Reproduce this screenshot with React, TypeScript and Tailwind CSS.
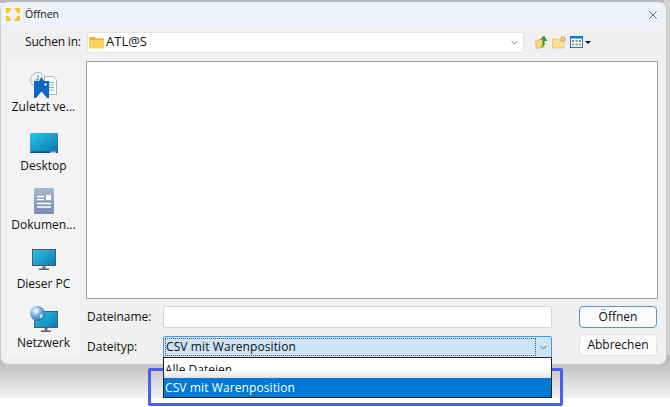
import React from "react";
import { ChevronDown, X } from "lucide-react";

const font = { fontFamily: '"Segoe UI", "Open Sans", "Noto Sans", sans-serif' };

function Folder({ className = "" }: { className?: string }) {
  return (
    <svg viewBox="0 0 16 14" className={className}>
      <path d="M0 2 Q0 1 1 1 H6 L7.5 2.5 H15 Q16 2.5 16 3.5 V5 H0 Z" fill="#e8b33a" />
      <path d="M0 4.5 H16 V12.5 Q16 13.5 15 13.5 H1 Q0 13.5 0 12.5 Z" fill="#fbd35c" />
    </svg>
  );
}

function Logo() {
  return (
    <svg viewBox="0 0 14 13" className="w-[14px] h-[13px]">
      <path d="M0 0 H5 V2 L3 4 V5 H0 Z M9 0 H14 V5 H11 V4 L9 2 Z M0 8 H3 V9 L5 11 V13 H0 Z M11 8 H14 V13 H9 V11 L11 9 Z" fill="#fcc22b" />
    </svg>
  );
}

function RecentIcon() {
  return (
    <svg viewBox="0 0 27 26" className="w-[27px] h-[26px]">
      <circle cx="8" cy="8" r="7.5" fill="#f2f2f2" stroke="#b5b8bb" />
      <path d="M8 3 V8 H5" stroke="#777c82" strokeWidth="1" fill="none" />
      <path d="M14.5 4.5 H23 L26.5 8 V22.5 H14.5 Z" fill="#fff" stroke="#a9afb5" />
      <path d="M19 10.5 H24 M19 13 H24 M19 15.5 H24 M19 18 H24" stroke="#72b4e8" />
      <path d="M4 9 H9 L11.5 5 L14 9 H19 V26 H4 Z" fill="#0a67c4" />
      <path d="M6 26 L11.5 19.5 L17 26 Z" fill="#f3f3f3" />
      <circle cx="15.5" cy="12.5" r="1.2" fill="#e6f2fb" />
    </svg>
  );
}

function DesktopIcon() {
  return (
    <svg viewBox="0 0 28 20" className="w-[28px] h-[20px]">
      <defs>
        <linearGradient id="dk" x1="0" y1="0" x2="1" y2="1">
          <stop offset="0" stopColor="#27c8e6" />
          <stop offset="1" stopColor="#0b72ae" />
        </linearGradient>
      </defs>
      <rect x="0" y="0" width="28" height="19" rx="1" fill="url(#dk)" />
      <rect x="0" y="18.5" width="28" height="1.5" fill="#0c4f7a" />
      <rect x="20" y="18.5" width="6" height="1.5" fill="#9fc5dc" />
    </svg>
  );
}

function DocIcon() {
  return (
    <svg viewBox="0 0 20 26" className="w-[20px] h-[26px]">
      <defs>
        <linearGradient id="dc" x1="0" y1="0" x2="0" y2="1">
          <stop offset="0" stopColor="#a3b7cf" />
          <stop offset="1" stopColor="#7890ae" />
        </linearGradient>
      </defs>
      <rect x="0" y="0" width="20" height="26" rx="1.5" fill="url(#dc)" />
      <path d="M3 8.5 H10 M3 11.5 H10 M3 15.5 H17 M3 19 H17" stroke="#fff" strokeWidth="1.3" />
      <rect x="12" y="7" width="5" height="5" fill="#fff" />
    </svg>
  );
}

function Monitor({ id, className }: { id: string; className: string }) {
  return (
    <svg viewBox="0 0 24 22" className={className}>
      <defs>
        <linearGradient id={id} x1="0" y1="0" x2="1" y2="1">
          <stop offset="0" stopColor="#2bc6e4" />
          <stop offset="1" stopColor="#0d78b8" />
        </linearGradient>
      </defs>
      <rect x="0.5" y="0.5" width="23" height="16" fill={`url(#${id})`} stroke="#4d5a64" />
      <rect x="10.5" y="17" width="3" height="3" fill="#6c7780" />
      <rect x="7" y="19.5" width="10" height="1.5" fill="#59636b" />
    </svg>
  );
}

function NetworkIcon() {
  return (
    <div className="relative w-[28px] h-[27px]">
      <div className="absolute right-0 bottom-0">
        <Monitor id="net" className="w-[24px] h-[22px]" />
      </div>
      <svg viewBox="0 0 15 15" className="absolute left-0 top-0 w-[15px] h-[15px]">
        <defs>
          <radialGradient id="gl" cx="0.35" cy="0.3" r="0.8">
            <stop offset="0" stopColor="#d8eefc" />
            <stop offset="0.6" stopColor="#5a9fd8" />
            <stop offset="1" stopColor="#1c5fa6" />
          </radialGradient>
        </defs>
        <circle cx="7.5" cy="7.5" r="7.5" fill="url(#gl)" />
        <path d="M4 3 L8 2 L9 6 L5 8 Z M10 9 L13 8 L12 12 L10 12 Z" fill="#e6f2fb" opacity="0.85" />
      </svg>
    </div>
  );
}

function UpIcon() {
  return (
    <svg viewBox="0 0 13 14" className="w-[13px] h-[14px]">
      <path d="M0.5 6 L5 4.5 L9 6 V12 L1.5 13.5 Z" fill="#f7d777" stroke="#d8a93a" strokeWidth="0.7" />
      <path d="M6 13 L9.5 10 V6 H12.5 L9 0.5 L5 4.5 H7.5 V9 Z" fill="#2f9e2f" />
    </svg>
  );
}

function NewFolderIcon() {
  return (
    <svg viewBox="0 0 14 13" className="w-[14px] h-[13px]">
      <path d="M0.5 3 H5 L6 4 H12 V12 H0.5 Z" fill="#f9e09a" stroke="#e0bb60" strokeWidth="0.7" />
      <circle cx="11" cy="3" r="2.6" fill="#dfa064" />
      <path d="M11 1.5 V4.5 M9.5 3 H12.5" stroke="#fff" strokeWidth="0.7" />
    </svg>
  );
}

function ViewIcon() {
  return (
    <svg viewBox="0 0 13 12" className="w-[13px] h-[12px]">
      <rect x="0.5" y="0.5" width="12" height="11" fill="#fff" stroke="#1a73c8" />
      <rect x="0.5" y="0.5" width="12" height="2" fill="#1a73c8" />
      <rect x="2" y="4" width="2" height="2" fill="#5b8fc9" />
      <rect x="5.5" y="4" width="2" height="2" fill="#6aa84f" />
      <rect x="9" y="4" width="2" height="2" fill="#5b8fc9" />
      <rect x="2" y="7.5" width="2" height="2" fill="#d9822b" />
      <rect x="5.5" y="7.5" width="2" height="2" fill="#5b8fc9" />
      <rect x="9" y="7.5" width="2" height="2" fill="#d9822b" />
    </svg>
  );
}

function Place({ icon, label, iconGap }: { icon: React.ReactNode; label: string; iconGap: string }) {
  return (
    <div className="h-[59px] flex flex-col items-center justify-end pb-[6px]">
      <div className={`flex items-end justify-center ${iconGap}`}>{icon}</div>
      <span className="text-[12px] leading-[16px] text-[#111] whitespace-nowrap">{label}</span>
    </div>
  );
}

export default function App() {
  return (
    <div className="relative w-[670px] h-[407px] overflow-hidden bg-white" style={font}>
      <div className="absolute inset-x-0 top-0 h-[3px] bg-[#b9b9b9]" />
      <div className="absolute right-0 top-0 w-[6px] h-[398px] bg-[#d4d4d4]" />
      <div className="absolute inset-x-0 top-[355px] h-[43px] bg-gradient-to-b from-[#b4b4b4] to-[#f3f3f3]" />
      <div className="relative mt-[2px] w-[667px] h-[363px] rounded-[8px] bg-[#f0f0f0] border border-[#c9c9c9] border-t-0 flex flex-col overflow-hidden">
        <div className="h-[25px] shrink-0 bg-[#eef2f9] flex items-center pl-[5px] pr-[6px] gap-[5px] rounded-t-[8px]">
          <Logo />
          <span className="text-[10.5px] text-[#111] flex-1">Öffnen</span>
          <X size={14} strokeWidth={1.2} className="text-[#333]" />
        </div>
        <div className="flex-1 flex flex-col pl-[6px] pr-[8px] pt-[5px] pb-[6px]">
          <div className="h-[20px] flex items-center shrink-0">
            <span className="w-[80px] pl-[18px] text-[12px] tracking-[-0.2px] text-[#111]">Suchen in:</span>
            <div className="w-[437px] h-[21px] bg-white rounded-[2px] border border-[#e3e3e3] flex items-center pl-[1px] pr-[3px] gap-[2px]">
              <Folder className="w-[15px] h-[13px]" />
              <span className="text-[13px] text-[#111] flex-1">ATL@S</span>
              <ChevronDown size={11} className="text-[#707070]" />
            </div>
            <div className="flex items-center ml-[11px] gap-[4px]">
              <UpIcon />
              <NewFolderIcon />
              <ViewIcon />
              <span className="w-0 h-0 border-x-[3px] border-x-transparent border-t-[3px] border-t-[#111] -ml-[2px]" />
            </div>
          </div>
          <div className="flex flex-1 mt-[9px] gap-[6px]">
            <div className="w-[73px] shrink-0 bg-[#f3f3f3] flex flex-col pt-[1px]">
              <Place icon={<RecentIcon />} label="Zuletzt ve..." iconGap="mb-[1px]" />
              <Place icon={<DesktopIcon />} label="Desktop" iconGap="mb-[5px]" />
              <Place icon={<DocIcon />} label="Dokumen..." iconGap="mb-[3px]" />
              <Place icon={<Monitor id="pc" className="w-[24px] h-[22px]" />} label="Dieser PC" iconGap="mb-[5px]" />
              <Place icon={<NetworkIcon />} label="Netzwerk" iconGap="mb-[2px]" />
            </div>
            <div className="flex-1 flex flex-col">
              <div className="h-[238px] shrink-0 bg-white border border-[#9b9ea3]" />
              <div className="flex mt-[7px]">
                <div className="w-[466px] flex flex-col">
                  <div className="flex items-center h-[22px]">
                    <span className="w-[77px] pl-[1px] text-[12px] text-[#111]">Dateiname:</span>
                    <div className="w-[389px] h-[22px] bg-white border border-[#d5d5d5] rounded-[2px]" />
                  </div>
                  <div className="flex items-center h-[22px] mt-[8px]">
                    <span className="w-[77px] pl-[1px] text-[12px] text-[#111]">Dateityp:</span>
                    <div className="w-[389px] h-[22px] bg-[#cce4f7] border border-[#4a9ad8] rounded-[2px] flex items-center pl-[1px]">
                      <div className="flex-1 h-[18px] border border-dotted border-[#555] flex items-center text-[12px] tracking-[0.1px] text-[#111]">
                        CSV mit Warenposition
                      </div>
                      <div className="w-[15px] flex justify-center">
                        <ChevronDown size={11} className="text-[#555]" />
                      </div>
                    </div>
                  </div>
                </div>
                <div className="flex flex-col ml-[27px] gap-[6px]">
                  <div className="w-[78px] h-[22px] bg-[#f9fbfd] border border-[#4a9ad8] rounded-[4px] flex items-center justify-center text-[12px] text-[#111]">
                    Öffnen
                  </div>
                  <div className="w-[78px] h-[22px] bg-[#fbfbfb] border border-[#e2e2e2] rounded-[4px] flex items-center justify-center text-[12px] text-[#111]">
                    Abbrechen
                  </div>
                </div>
              </div>
            </div>
          </div>
        </div>
      </div>
      <div className="absolute left-[148px] top-[368px] w-[415px] h-[38px] border-[3px] border-[#4a5ff2] rounded-[2px]" />
      <div className="absolute left-[163px] top-[357px] w-[389px] h-[41px] bg-white border border-[#222] flex flex-col">
        <div className="relative h-[20px] shrink-0 overflow-hidden text-[12px] leading-[23px] text-[#111] pl-[1px]">
          Alle Dateien
          <div className="absolute inset-x-0 top-[13px] h-[7px] bg-gradient-to-b from-[#fbfbfb] to-[#e2e2e2]" />
        </div>
        <div className="flex-1 bg-[#0078d4] text-white text-[12px] tracking-[0.1px] leading-[19px] pl-[1px]">CSV mit Warenposition</div>
      </div>
    </div>
  );
}
